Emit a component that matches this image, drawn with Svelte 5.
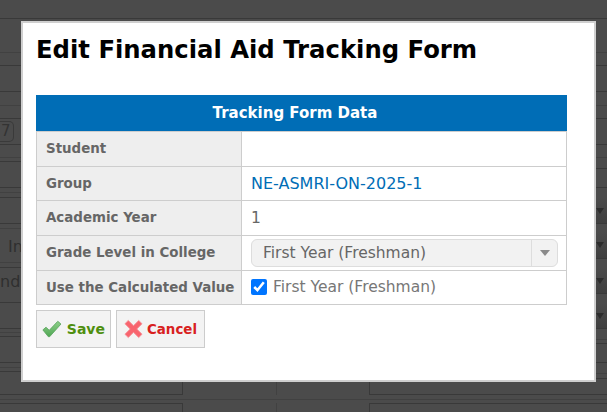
<script lang="ts">
  // y position of each rule in the dimmed page behind the dialog
  const rules = [
    { y: 18, tone: 'dark' },
    { y: 52, tone: 'faint' },
    { y: 65, tone: 'dark' },
    { y: 91, tone: 'dark' },
    { y: 105, tone: 'faint' },
    { y: 118, tone: 'dark' },
    { y: 144, tone: 'dark', box: true },
    { y: 157, tone: 'faint' },
    { y: 161, tone: 'dark' },
    { y: 187, tone: 'dark' },
    { y: 192, tone: 'faint' },
    { y: 197, tone: 'dark' },
    { y: 223, tone: 'dark', sel: true },
    { y: 228, tone: 'faint' },
    { y: 231, tone: 'right' },
    { y: 258, tone: 'right', sel: true },
    { y: 262, tone: 'faint', label: 'In' },
    { y: 267, tone: 'dark' },
    { y: 293, tone: 'right', sel: true, label: 'nd' },
    { y: 297, tone: 'right' },
    { y: 302, tone: 'dark' },
    { y: 328, tone: 'dark', sel: true },
    { y: 332, tone: 'faint' },
    { y: 336, tone: 'dark' },
    { y: 362, tone: 'dark' },
    { y: 367, tone: 'faint' },
    { y: 371, tone: 'dark' }
  ];

  const rows = rules.map((r, i) => ({ ...r, h: r.y + 1 - (i ? rules[i - 1].y + 1 : 0) }));
</script>

<div class="page">
  <div class="backdrop">
    {#each rows as row}
      <div class="bg-row {row.tone}" style="height: {row.h}px">
        <div class="bg-left">
          {#if row.box}<span class="num-box">7</span>{/if}
          {#if row.label === 'In'}<span class="bg-word in">In</span>{/if}
          {#if row.label === 'nd'}<span class="bg-word">nd</span>{/if}
        </div>
        <div class="bg-right" class:sel={row.sel}>
          {#if row.sel}<i class="tri"></i>{/if}
        </div>
      </div>
    {/each}
    <div class="bg-cols first">
      <div></div><div></div><div></div><div></div>
    </div>
    <div class="bg-gap"></div>
    <div class="bg-cols second">
      <div></div><div></div><div></div><div></div>
    </div>
  </div>

  <div class="modal">
    <h1>Edit Financial Aid Tracking Form</h1>

    <table>
      <colgroup>
        <col class="col-label" />
        <col />
      </colgroup>
      <thead>
        <tr><th colspan="2">Tracking Form Data</th></tr>
      </thead>
      <tbody>
        <tr class="r1">
          <td class="label">Student</td>
          <td></td>
        </tr>
        <tr class="r2">
          <td class="label">Group</td>
          <td class="value"><a href="#group">NE-ASMRI-ON-2025-1</a></td>
        </tr>
        <tr class="r3">
          <td class="label">Academic Year</td>
          <td class="value">1</td>
        </tr>
        <tr class="r4">
          <td class="label">Grade Level in College</td>
          <td class="control">
            <div class="select">
              <span class="select-text">First Year (Freshman)</span>
              <span class="select-arrow"><i></i></span>
            </div>
          </td>
        </tr>
        <tr class="r5">
          <td class="label">Use the Calculated Value</td>
          <td>
            <label class="check">
              <input type="checkbox" checked />
              <span>First Year (Freshman)</span>
            </label>
          </td>
        </tr>
      </tbody>
    </table>

    <div class="actions">
      <button type="button" class="btn save">
        <svg width="22" height="20" viewBox="0 0 22 20" aria-hidden="true">
          <defs>
            <linearGradient id="ok" x1="0" x2="0" y1="0" y2="1">
              <stop offset="0%" stop-color="#8fd08a" />
              <stop offset="100%" stop-color="#4fa653" />
            </linearGradient>
          </defs>
          <path d="M1 11 L4.5 8 L8 11.5 L17.5 1.5 L21 4.5 L8.5 18.5 L7 18.5 Z" fill="url(#ok)" stroke="#5fa763" stroke-width="1" stroke-linejoin="round" />
        </svg>
        Save
      </button>
      <button type="button" class="btn cancel">
        <svg width="20" height="20" viewBox="0 0 20 20" aria-hidden="true">
          <path d="M4.5 1 L10 6.5 L15.5 1 L19 4.5 L13.5 10 L19 15.5 L15.5 19 L10 13.5 L4.5 19 L1 15.5 L6.5 10 L1 4.5 Z" fill="#f8646e" stroke="#f4939a" stroke-width="1" stroke-linejoin="round" />
        </svg>
        Cancel
      </button>
    </div>
  </div>
</div>

<style>
  :global(body) {
    margin: 0;
    background: #4b4b4b;
  }

  .page {
    position: relative;
    width: 607px;
    height: 412px;
    overflow: hidden;
    font-family: "DejaVu Sans", Verdana, sans-serif;
  }

  .backdrop {
    display: flex;
    flex-direction: column;
    height: 412px;
    background: #4b4b4b;
  }

  .bg-row {
    display: flex;
    justify-content: space-between;
    flex-shrink: 0;
    box-sizing: border-box;
  }

  .bg-left {
    position: relative;
    flex: 1;
    box-sizing: border-box;
    border-bottom: 1px solid #393939;
  }

  .bg-right {
    width: 11px;
    box-sizing: border-box;
    border-bottom: 1px solid #393939;
    padding: 10px 0 0;
  }

  .bg-row.faint .bg-left,
  .bg-row.faint .bg-right {
    border-bottom-color: #414141;
  }

  .bg-row.right .bg-left {
    border-bottom-color: transparent;
  }

  .bg-right.sel {
    background: linear-gradient(#4b4b4b, #3f3f3f);
  }

  .tri {
    display: block;
    width: 0;
    height: 0;
    border-left: 4px solid transparent;
    border-right: 4px solid transparent;
    border-top: 6px solid #2c2c2c;
  }

  .num-box {
    position: absolute;
    left: 0;
    top: 2px;
    width: 14px;
    height: 21px;
    box-sizing: border-box;
    border: 1px solid #3a3a3a;
    border-left: none;
    border-radius: 0 5px 5px 0;
    color: #333;
    font-size: 15px;
    line-height: 19px;
    padding-left: 1px;
  }

  .bg-word {
    position: absolute;
    left: 0;
    bottom: 2px;
    color: #2f2f2f;
    font-size: 16px;
  }

  .bg-word.in {
    left: 8px;
    bottom: 6px;
  }

  .bg-cols {
    display: grid;
    grid-template-columns: 183px 94px 93px 1fr;
  }

  .bg-cols > div {
    box-sizing: border-box;
    border-right: 1px solid #393939;
  }

  .bg-cols > div:nth-child(2) {
    border-right-color: #414141;
  }

  .bg-cols > div:last-child {
    border-right: none;
  }

  .bg-cols.first {
    height: 26px;
  }

  .bg-cols.first > div:nth-child(1),
  .bg-cols.first > div:nth-child(4) {
    border-bottom: 1px solid #393939;
  }

  .bg-gap {
    height: 5px;
    box-sizing: border-box;
    border-bottom: 1px solid #414141;
  }

  .bg-cols.second {
    height: 10px;
    padding-top: 3px;
  }

  .bg-cols.second > div:nth-child(1),
  .bg-cols.second > div:nth-child(4) {
    border-top: 1px solid #393939;
  }

  .modal {
    position: absolute;
    left: 21px;
    top: 21px;
    width: 575px;
    height: 361px;
    box-sizing: border-box;
    padding: 11px 27px 0 13px;
    background: #fff;
    border: 2px solid #cfcfcf;
  }

  h1 {
    margin: 0;
    height: 61px;
    color: #000;
    font-size: 24.3px;
    font-weight: 700;
    line-height: 32px;
  }

  table {
    width: 531px;
    border-collapse: collapse;
    table-layout: fixed;
    font-size: 15.5px;
    line-height: 1;
  }

  .col-label {
    width: 205px;
  }

  th {
    box-sizing: border-box;
    height: 36px;
    padding: 0 13px 1px 0;
    border: 1px solid #006db6;
    border-bottom-color: #cdcdcd;
    background: #006db6;
    color: #fff;
    font-size: 15px;
    font-weight: 700;
    text-align: center;
  }

  td {
    box-sizing: border-box;
    padding: 0 9px;
    border: 1px solid #cdcdcd;
    color: #666;
  }

  .label {
    background: #eee;
    color: #666;
    font-size: 13.4px;
    font-weight: 700;
    padding: 0 0 0 9px;
    white-space: nowrap;
  }

  .value {
    padding-top: 2px;
  }

  .control {
    padding-right: 8px;
  }

  .r1 td { height: 35px; }
  .r2 td { height: 34px; }
  .r3 td { height: 35px; }
  .r4 td { height: 35px; }
  .r5 td { height: 34px; }

  a {
    color: #006db6;
    font-size: 16px;
    text-decoration: none;
  }

  .select {
    display: flex;
    align-items: center;
    height: 28px;
    box-sizing: border-box;
    border: 1px solid #ddd;
    border-radius: 6px;
    background: #f2f2f2;
  }

  .select-text {
    flex: 1;
    padding: 2px 0 0 11px;
    color: #666;
  }

  .select-arrow {
    display: flex;
    align-items: center;
    justify-content: center;
    width: 25px;
    height: 100%;
    border-left: 1px solid #ddd;
  }

  .select-arrow i {
    width: 0;
    height: 0;
    border-left: 5px solid transparent;
    border-right: 5px solid transparent;
    border-top: 6px solid #8a8a8a;
  }

  .check {
    display: flex;
    align-items: center;
    gap: 6px;
    color: #777;
  }

  .check input {
    width: 16px;
    height: 16px;
    margin: 0 0 2px;
    accent-color: #0075ff;
  }

  .actions {
    display: flex;
    gap: 5px;
    margin-top: 5px;
  }

  .btn {
    display: flex;
    align-items: center;
    height: 38px;
    box-sizing: border-box;
    background: #f3f3f3;
    border: 1px solid #ccc;
    font-family: inherit;
    font-weight: 700;
  }

  .save {
    width: 75px;
    gap: 5px;
    padding: 0 5px;
    color: #4f8f0f;
    font-size: 14px;
  }

  .cancel {
    width: 89px;
    gap: 4px;
    padding: 0 7px;
    color: #d8211e;
    font-size: 13.4px;
  }
</style>
